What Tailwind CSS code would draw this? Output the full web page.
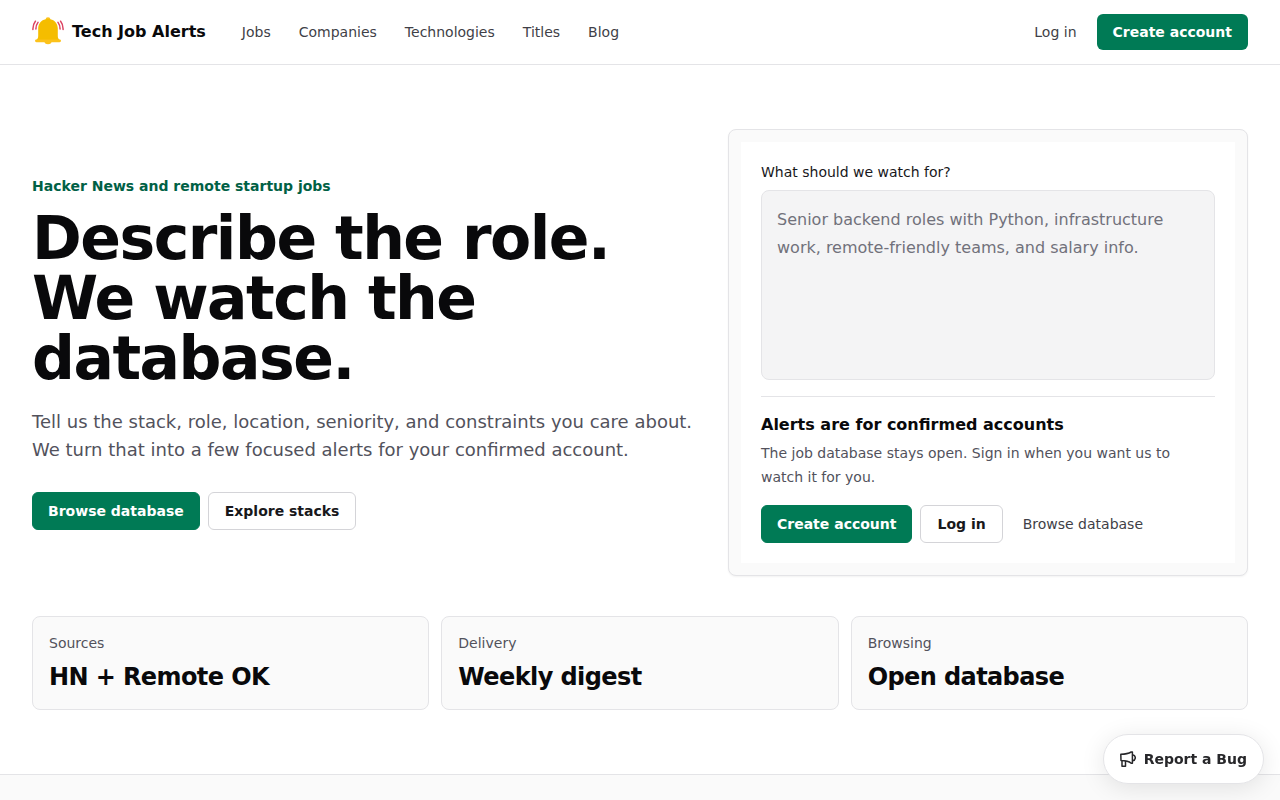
<!DOCTYPE html>
<html lang="en">
<head>
<meta charset="utf-8">
<meta name="viewport" content="width=device-width, initial-scale=1">
<title>Tech Job Alerts</title>
<script src="https://cdn.jsdelivr.net/npm/@tailwindcss/browser@4"></script>
</head>
<body class="bg-white font-['DejaVu_Sans',sans-serif] text-zinc-950">
<header class="border-b border-zinc-200">
  <div class="flex h-16 items-center justify-between px-8">
    <div class="flex items-center gap-9">
      <a href="#" class="flex items-center gap-2 font-bold">
        <svg class="size-8" viewBox="0 0 32 32" fill="none" aria-hidden="true">
          <g stroke="#dc4463" stroke-width="1.5" stroke-linecap="round">
            <path d="M3.400 5.200C1.600 7.400.8 10 .9 13.500M6 6.400C4.600 8.200 3.900 10.200 3.900 13M28.600 5.200c1.800 2.200 2.600 4.800 2.500 8.300M26 6.400c1.400 1.800 2.100 3.800 2.100 6.600"/>
          </g>
          <circle cx="16" cy="3.6" r="2.4" fill="#fcc21b"/>
          <path d="M12.4 25h7.2a3.6 3.2 0 0 1-7.2 0Z" fill="#fcc21b"/>
          <path d="M16 3C10 3 6.200 7.200 6.200 12.600V20c0 2-.8 3.400-2.200 4h24c-1.400-.6-2.200-2-2.200-4v-7.400C25.800 7.200 22 3 16 3Z" fill="#f5bd00"/>
          <rect x="3" y="23.400" width="26" height="2.800" rx="1.400" fill="#fcc21b"/>
        </svg>
        Tech Job Alerts
      </a>
      <nav class="flex gap-7 text-sm text-zinc-700">
        <a href="#">Jobs</a>
        <a href="#">Companies</a>
        <a href="#">Technologies</a>
        <a href="#">Titles</a>
        <a href="#">Blog</a>
      </nav>
    </div>
    <div class="flex items-center gap-5 text-sm">
      <a href="#" class="text-zinc-700">Log in</a>
      <a href="#" class="rounded-md bg-emerald-700 px-4 py-2 font-bold text-white">Create account</a>
    </div>
  </div>
</header>
<main>
  <section class="px-8 py-16">
    <div class="grid grid-cols-[minmax(0,1fr)_520px] items-center gap-8">
      <div>
        <p class="text-sm font-bold text-emerald-800">Hacker News and remote startup jobs</p>
        <h1 class="mt-3 max-w-2xl text-6xl/[60px] font-bold tracking-tight">Describe the role. We watch the database.</h1>
        <p class="mt-5 text-lg/7 text-zinc-600">Tell us the stack, role, location, seniority, and constraints you care about. We turn that into a few focused alerts for your confirmed account.</p>
        <div class="mt-7 flex gap-2 text-sm font-bold">
          <a href="#" class="rounded-md border border-emerald-700 bg-emerald-700 px-[15px] py-2 text-white">Browse database</a>
          <a href="#" class="rounded-md border border-zinc-300 bg-white px-4 py-2 text-zinc-900">Explore stacks</a>
        </div>
      </div>
      <div class="rounded-lg border border-zinc-200 bg-zinc-50 p-3 shadow-xs">
        <form class="bg-white p-5">
          <label for="watch" class="block text-sm text-zinc-900">What should we watch for?</label>
          <textarea id="watch" class="mt-2 block h-[190px] w-full resize-none rounded-lg border border-zinc-200 bg-zinc-100 px-[15px] py-[15px] text-base/7 placeholder:text-zinc-500" placeholder="Senior backend roles with Python, infrastructure work, remote-friendly teams, and salary info."></textarea>
          <div class="mt-4 border-t border-zinc-200 pt-4">
            <h2 class="text-base/6 font-bold">Alerts are for confirmed accounts</h2>
            <p class="mt-1 text-sm/6 text-zinc-600">The job database stays open. Sign in when you want us to watch it for you.</p>
            <div class="mt-4 flex items-center gap-2 text-sm">
              <button type="button" class="rounded-md border border-emerald-700 bg-emerald-700 px-[15px] py-2 font-bold text-white">Create account</button>
              <button type="button" class="rounded-md border border-zinc-300 bg-white px-4 py-2 font-bold text-zinc-900">Log in</button>
              <a href="#" class="px-3 text-zinc-700">Browse database</a>
            </div>
          </div>
        </form>
      </div>
    </div>
    <dl class="mt-10 grid grid-cols-3 gap-3">
      <div class="rounded-lg border border-zinc-200 bg-zinc-50 p-4">
        <dt class="text-sm text-zinc-600">Sources</dt>
        <dd class="mt-2 text-2xl font-bold tracking-tight">HN + Remote OK</dd>
      </div>
      <div class="rounded-lg border border-zinc-200 bg-zinc-50 p-4">
        <dt class="text-sm text-zinc-600">Delivery</dt>
        <dd class="mt-2 text-2xl font-bold tracking-tight">Weekly digest</dd>
      </div>
      <div class="rounded-lg border border-zinc-200 bg-zinc-50 p-4">
        <dt class="text-sm text-zinc-600">Browsing</dt>
        <dd class="mt-2 text-2xl font-bold tracking-tight">Open database</dd>
      </div>
    </dl>
  </section>
  <section class="h-[26px] border-t border-zinc-200 bg-zinc-50"></section>
</main>
<button type="button" class="fixed right-4 bottom-4 flex h-[50px] items-center gap-2 rounded-full border border-zinc-200 bg-white px-4 text-sm font-bold text-zinc-800 shadow-[0_4px_24px_rgba(0,0,0,0.1)]">
  <svg class="size-4" viewBox="0 0 16 16" fill="none" stroke="currentColor" stroke-width="1.500" stroke-linejoin="round" aria-hidden="true">
    <path d="M.8 3.200c4.200 0 7.600-.5 10.400-2.200h1.200v11.300h-1.200C8.800 10.200 6 9.600 1 9.600Z"/>
    <path d="M12.500 3.700c1.900.3 2.800 1.500 2.800 3s-.9 2.700-2.800 3"/>
    <path d="M2 9.700v5.500h3.500V9.800"/>
  </svg>
  Report a Bug
</button>
</body>
</html>
